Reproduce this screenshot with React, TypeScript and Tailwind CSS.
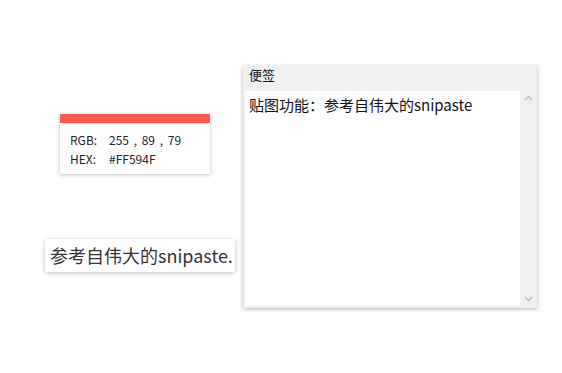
import React from "react";

const font = { fontFamily: '"Noto Sans CJK SC", "Noto Sans", sans-serif' };

export default function App() {
  return (
    <div className="relative w-[562px] h-[373px] bg-white overflow-hidden" style={font}>
      {/* color picker card */}
      <div className="absolute left-[60px] top-[114px] w-[150px] h-[60px] bg-white shadow-[0_1px_4px_rgba(0,0,0,0.25)]">
        <div className="h-[9px] bg-[#ff594f]" />
        <div className="pl-[10px] pt-[7px] text-[12px] leading-[19px] text-[#222] [word-spacing:2px]">
          <div className="flex"><span className="w-[39px]">RGB:</span><span>255 , 89 , 79</span></div>
          <div className="flex"><span className="w-[39px]">HEX:</span><span>#FF594F</span></div>
        </div>
      </div>

      {/* pasted text snippet */}
      <div className="absolute left-[45px] top-[239px] h-[33px] w-[190px] bg-white shadow-[0_1px_4px_rgba(0,0,0,0.25)] flex items-center pl-[5px] text-[18px] text-[#333] whitespace-nowrap overflow-hidden">
        参考自伟大的snipaste.
      </div>

      {/* note window */}
      <div className="absolute left-[243px] top-[66px] w-[294px] h-[242px] bg-[#f0f0f0] shadow-[0_1px_4px_rgba(0,0,0,0.3)] flex flex-col">
        <div className="h-[25px] pl-[6px] pt-[0px] text-[13px] leading-[18px] text-[#111]">便签</div>
        <div className="flex flex-1 pl-[2px] pb-[2px]">
          <div className="flex-1 bg-white pl-[4px] pt-[4px] text-[15px] leading-[20px] text-[#111]">
            贴图功能：参考自伟大的snipaste
          </div>
          <div className="w-[17px] flex flex-col justify-between items-center py-[4px]">
            <svg width="9" height="6" viewBox="0 0 9 6"><path d="M1 5 L4.5 1.5 L8 5" fill="none" stroke="#b8b8b8" strokeWidth="1.5" /></svg>
            <svg width="9" height="6" viewBox="0 0 9 6"><path d="M1 1 L4.5 4.5 L8 1" fill="none" stroke="#b8b8b8" strokeWidth="1.5" /></svg>
          </div>
        </div>
      </div>
    </div>
  );
}
